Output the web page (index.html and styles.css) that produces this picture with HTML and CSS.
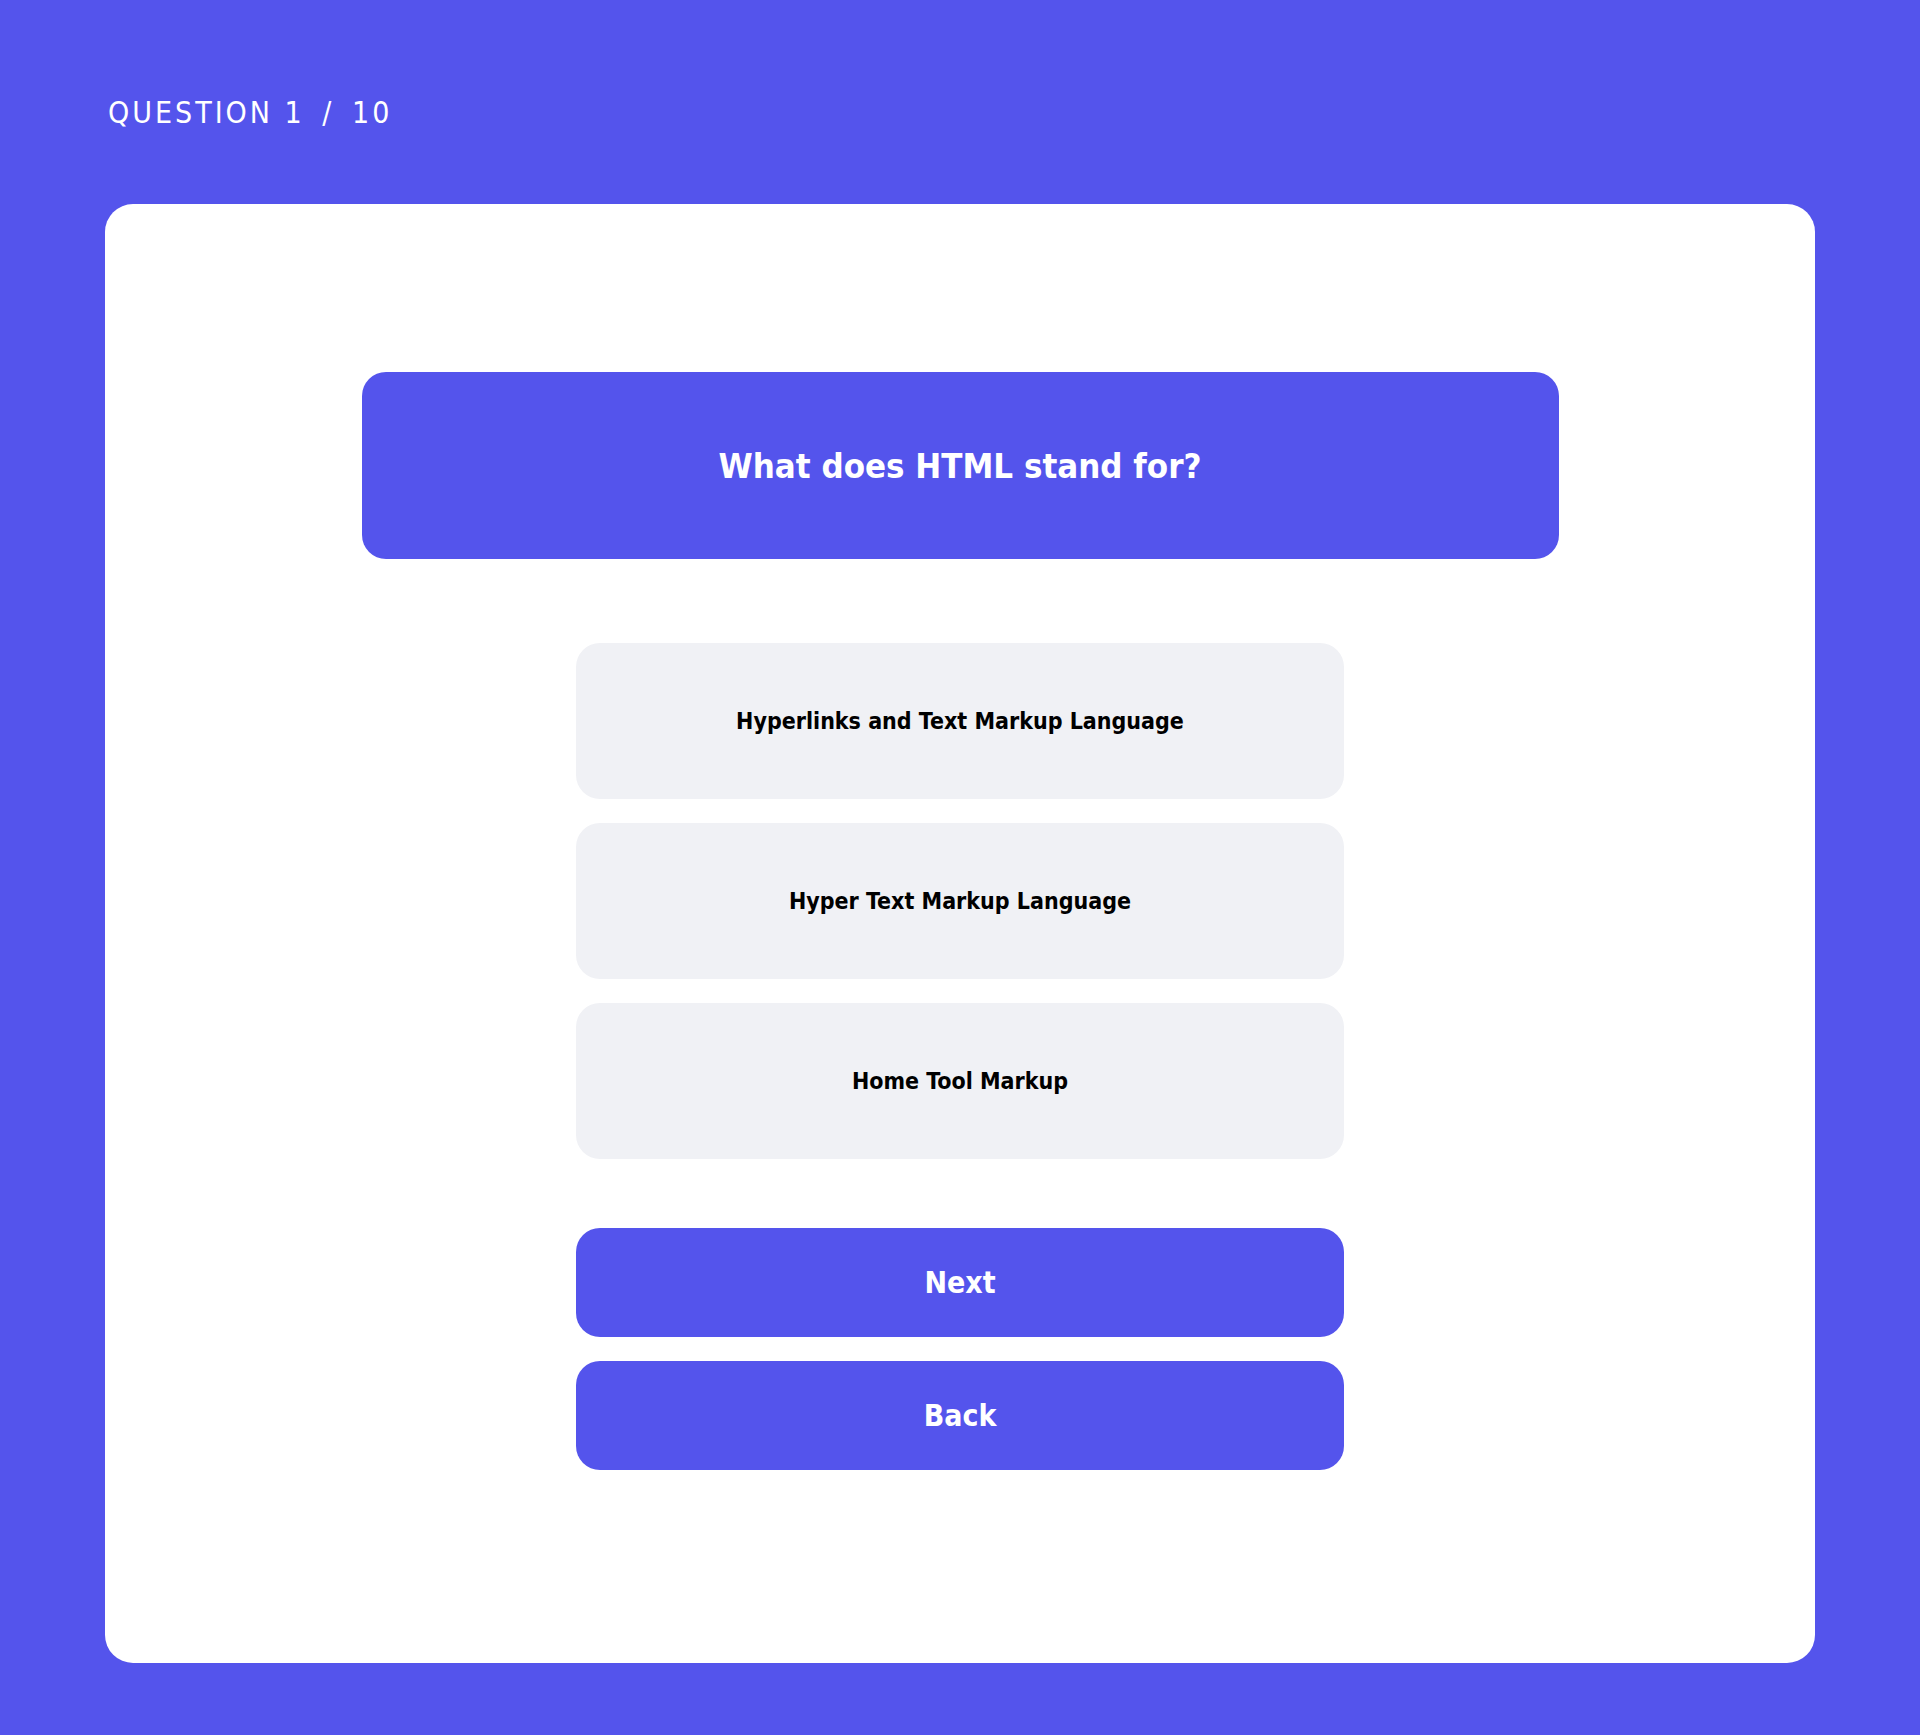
FILE: index.html
```html
<!DOCTYPE html>
<html lang="en">
<head>
<meta charset="utf-8">
<title>Quiz</title>
<link rel="stylesheet" href="styles.css">
</head>
<body>
<div class="page">
  <header class="header">QUESTION 1 <span class="sep">/</span> 10</header>
  <main class="card">
    <div class="question">What does HTML stand for?</div>
    <div class="options">
      <button class="option">Hyperlinks and Text Markup Language</button>
      <button class="option">Hyper Text Markup Language</button>
      <button class="option">Home Tool Markup</button>
    </div>
    <div class="actions">
      <button class="action">Next</button>
      <button class="action">Back</button>
    </div>
  </main>
</div>
</body>
</html>
```
FILE: styles.css
```css
* { box-sizing: border-box; }
html, body { margin: 0; padding: 0; }
body {
  background: #5454ec;
  font-family: "DejaVu Sans Condensed", "DejaVu Sans", sans-serif;
  font-stretch: condensed;
}
.page {
  padding: 95px 105px 72px;
}
.header {
  color: #fff;
  font-size: 30px;
  line-height: 36px;
  letter-spacing: 0.1em;
  padding-left: 3px;
}
.sep { margin: 0 6px; }
.card {
  margin-top: 73px;
  background: #fff;
  border-radius: 28px;
  padding: 168px 0 193px;
  display: flex;
  flex-direction: column;
  align-items: center;
}
.question {
  width: 1197px;
  height: 187px;
  background: #5454ec;
  border-radius: 24px;
  color: #fff;
  font-size: 34.5px;
  font-weight: bold;
  display: flex;
  align-items: center;
  justify-content: center;
}
.options {
  margin-top: 84px;
  width: 768px;
  display: flex;
  flex-direction: column;
  gap: 24px;
}
.option {
  height: 156px;
  border: 0;
  border-radius: 24px;
  background: #f0f1f5;
  color: #000;
  font-family: inherit;
  font-stretch: condensed;
  font-size: 23px;
  font-weight: bold;
  padding: 0;
}
.actions {
  margin-top: 69px;
  width: 768px;
  display: flex;
  flex-direction: column;
  gap: 24px;
}
.action {
  height: 109px;
  border: 0;
  border-radius: 24px;
  background: #5454ec;
  color: #fff;
  font-family: inherit;
  font-stretch: condensed;
  font-size: 30px;
  font-weight: bold;
  padding: 0;
}
```
